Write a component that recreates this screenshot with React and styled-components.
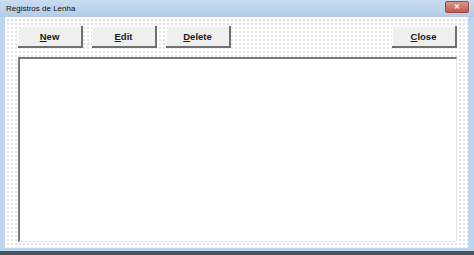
import React from 'react'
import styled, { createGlobalStyle } from 'styled-components'

const Global = createGlobalStyle`
  html, body { margin: 0; padding: 0; background: #ffffff; }
  #root { width: 474px; height: 255px; }
`

const Frame = styled.div`
  width: 474px;
  height: 255px;
  box-sizing: border-box;
  display: flex;
  flex-direction: column;
  background: #bcd4ec;
  font-family: "Liberation Sans", Arial, sans-serif;
`

const TitleBar = styled.div`
  height: 17px;
  display: flex;
  align-items: center;
  justify-content: space-between;
  padding: 0 5px 0 6px;
  background: linear-gradient(#c9dcf0, #b2cbe7);
  font-size: 8px;
  color: #111;
`

const CloseX = styled.div`
  width: 22px;
  height: 10px;
  margin-top: -4px;
  border-radius: 2px;
  background: linear-gradient(#dd9486, #c35a4a);
  border: 1px solid #9a4a40;
  color: #fff;
  font-size: 7px;
  font-weight: bold;
  line-height: 10px;
  text-align: center;
`

const Body = styled.div`
  flex: 1;
  display: flex;
  flex-direction: column;
  margin: 0 6px 0 5px;
  padding: 9px 11px 6px 13px;
  gap: 9px;
  background-color: #ffffff;
  background-image: radial-gradient(circle, #d2d2d2 0.6px, transparent 0.9px);
  background-size: 4px 4px;
  background-position: 1px 1px;
`

const Toolbar = styled.div`
  display: flex;
  gap: 9px;
`

const Button = styled.button`
  width: 65px;
  height: 22px;
  margin-left: ${p => (p.$push ? 'auto' : '0')};
  box-sizing: border-box;
  background: #efefef;
  border: none;
  border-right: 2px solid #707070;
  border-bottom: 2px solid #707070;
  box-shadow: inset 1px 1px 0 #ffffff;
  font-family: "Liberation Sans", Arial, sans-serif;
  font-weight: bold;
  font-size: 9.5px;
  color: #1a1a1a;
  padding: 0;
  u { text-decoration: underline; }
`

const ListBox = styled.div`
  flex: 1;
  background: #ffffff;
  border-top: 2px solid #7a7a7a;
  border-left: 2px solid #7a7a7a;
  border-right: 1px solid #e4e4e4;
  border-bottom: 1px solid #e4e4e4;
`

const BottomEdge = styled.div`
  height: 7px;
  background: linear-gradient(#bcd4ec 0 3px, #4b5560 3px);
`

export default function App() {
  return (
    <>
      <Global />
      <Frame>
        <TitleBar>
          <span>Registros de Lenha</span>
          <CloseX>✕</CloseX>
        </TitleBar>
        <Body>
          <Toolbar>
            <Button><u>N</u>ew</Button>
            <Button><u>E</u>dit</Button>
            <Button><u>D</u>elete</Button>
            <Button $push><u>C</u>lose</Button>
          </Toolbar>
          <ListBox />
        </Body>
        <BottomEdge />
      </Frame>
    </>
  )
}
